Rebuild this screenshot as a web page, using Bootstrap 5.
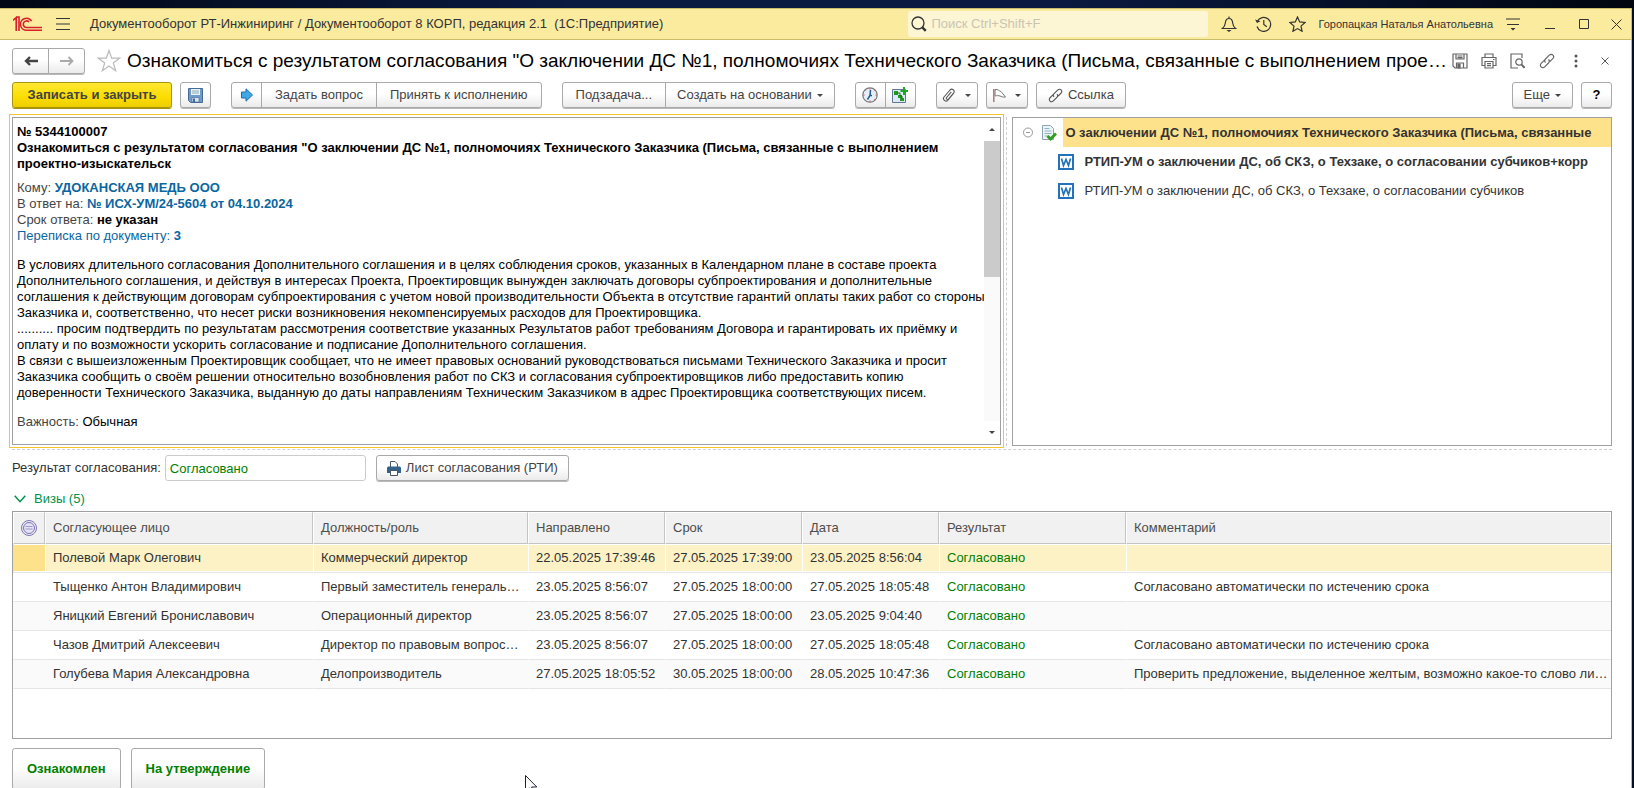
<!DOCTYPE html>
<html lang="ru">
<head>
<meta charset="utf-8">
<meta name="viewport" content="width=device-width, initial-scale=1">
<title>Документооборот</title>
<link href="https://cdn.jsdelivr.net/npm/bootstrap@5.3.0/dist/css/bootstrap.min.css" rel="stylesheet">
<style>
body{font-family:"Liberation Sans",Arial,sans-serif;font-size:13px;line-height:16px;color:#333;background:#050f24}
svg{display:block;flex:none}
.desk-strip{height:8px;background:linear-gradient(90deg,#020814,#0a1a40 35%,#0a1a40 65%,#01060f)}
.app-window{background:#fff;margin-right:2px;border-right:1px solid #c9bd6a}
.title-bar{height:32px;background:#faeb9f;border:solid #c9bd6a;border-width:1px 0;padding-left:13px}
.title-bar button,.form-icons button{border:0;background:none;padding:0;color:#333;width:34px;display:flex;justify-content:center}
.title-bar .user-btn{font-size:11px;width:auto;white-space:nowrap}
.title-bar .menu-btn{width:40px}
.title-bar .close-btn{width:30px}
.app-name{font-size:13px;white-space:pre;color:#333;margin-left:10px}
.search-box{width:300px;height:26px;background:#fdf6d5;border-radius:3px;padding-left:3px;gap:4px}
.search-box input{border:0;background:none;outline:0;padding:0;width:100%;font-size:13px}
.search-box input::placeholder{color:#c9c4b4;opacity:1}
.form-head{padding:1px 12px 0 12px;height:40px}
.form-title{font-size:19px;line-height:24px;color:#000;margin:0;min-width:0;white-space:nowrap}
.form-icons button{width:29px;color:#555}
.btn{--bs-btn-font-size:13px;--bs-btn-line-height:16px;--bs-btn-padding-y:0;--bs-btn-padding-x:13px;--bs-btn-border-radius:3px;--bs-btn-color:#444;--bs-btn-border-color:#a9a9a9;
 height:26px;background:linear-gradient(#fff 45%,#ebebeb);box-shadow:0 1px 0 #b9b9b9;display:inline-flex;align-items:center;justify-content:center;white-space:nowrap;gap:5px}
.btn-group{box-shadow:0 1px 0 #b9b9b9;border-radius:3px}
.btn-group .btn{box-shadow:none;flex:none}
.btn-main{--bs-btn-border-color:#a8950c;background:linear-gradient(#ffe834,#fbdd00 60%,#eecd00);font-weight:700;color:#444;width:160px;box-shadow:0 1px 0 #a8950c}
.btn-ico{--bs-btn-padding-x:0;width:31px}
.btn-nav{--bs-btn-padding-x:0;width:37px}
.btn-drop{--bs-btn-padding-x:0;width:42px}
.btn-slim{--bs-btn-padding-x:11px}
.caret{width:0;height:0;border:3px solid transparent;border-top-color:#444;border-bottom:0}
.commands{padding:2px 19px 0 12px}
.grp{margin-right:20px}
.grp-first{margin-left:20px}
.panels{padding:0 19px 0 9px;margin-top:6px;height:334px}
.message-focus{border:1px solid #f6c52e;padding:2px;flex:995 1 0;min-width:0}
.message-box{border:1px solid #a0a0a0;color:#000;height:100%}
.message-text{padding:6px 0 0 4px;font-size:13px;line-height:16px;white-space:nowrap;min-width:0}
.message-text p{margin:0}
.message-text .para{margin-top:13px}
.message-text a{color:#0a66a0;text-decoration:none}
.message-text .k{color:#444}
.scroll-rail{width:16px}
.scroll-track{background:#fafafa}
.scroll-thumb{height:136px;background:#cbcbcb}
.scroll-end{height:23px;display:flex;align-items:center;justify-content:center}
.up{transform:rotate(180deg)}
.split-v{width:6px;border-left:1px dashed #d0d0d0;margin:3px 0 2px 2px}
.tree{border:1px solid #a0a0a0;margin:3px 0 2px;flex:601 1 0;min-width:0;list-style:none;padding:0}
.tree li{height:29px;white-space:nowrap}
.tree-top{padding-left:8px;gap:6px}
.tree-hit{background:#fee28b;padding-left:2px}
.tree-sub{padding-left:45px;gap:10px}
.split-h{height:1px;border-top:1px dashed #d0d0d0;margin:1px 19px 0 12px}
.result-row{padding:5px 19px 0 12px}
.result-row input{width:201px;height:26px;border:1px solid #ccc;border-radius:3px;padding:0 4px;color:#008000;outline:0}
.print-btn{margin-left:10px;--bs-btn-padding-x:10px}
.visa-row{padding:10px 0 0 14px}
.visa-link{color:#00924a;text-decoration:none}
.visa-panel{border:1px solid #a0a0a0;margin:4px 19px 0 12px}
.visa-table{table-layout:fixed;width:100%;margin:0;border-collapse:separate;border-spacing:0}
.visa-table th,.visa-table td{padding:0 3px 0 7px;overflow:hidden;text-overflow:ellipsis;white-space:nowrap;font-weight:400}
.visa-table th{height:32px;background:#f1f1f1;color:#4d4d4d;border:1px solid #fff;border-right-color:#c4c4c4;border-bottom:1px solid #c4c4c4}
.visa-table td{height:29px;color:#333;border-bottom:1px solid #e5e5e5;border-left:1px solid transparent}
.visa-table th:last-child{border-right-color:#fff}
.visa-table tr:nth-child(odd) td{background:#fafafa}
.visa-table tr.chosen td{background:#fdf1c6;border-left-color:#fff;box-shadow:inset 0 1px #fff,inset 0 -1px #fff}
.visa-table tr.chosen td:first-child{background:#fee28b;border-left-color:#fee28b}
.visa-table td.ok{color:#008000}
.w1{width:32px}.w2{width:268px}.w3{width:215px}.w4{width:137px}.w5{width:187px}
.foot{height:49px;padding:9px 12px 0;overflow:hidden;gap:10px}
.foot .btn{--bs-btn-padding-x:14px;height:42px;font-weight:700;color:#008000}
.pointer{position:absolute;left:525px;bottom:-7px}
</style>
</head>
<body>
<div class="vh-100 d-flex flex-column overflow-hidden position-relative">
<div class="desk-strip flex-shrink-0"></div>
<div class="app-window flex-grow-1 d-flex flex-column">
<header class="title-bar d-flex align-items-center flex-shrink-0">
  <svg class="me-1" width="29" height="16" viewBox="0 0 29 16" fill="none" stroke="#d8202a" stroke-width="1.6"><path d="M0 4.300 3.200 1.600V15M3 1h3v14"/><path d="M18.600 5.200A6 6 0 1 0 14 14.200H29M16 6A3.300 3.300 0 1 0 14 11.500H29"/></svg>
  <button aria-label="Меню"><svg width="14" height="14" viewBox="0 0 14 14" stroke="#333" stroke-width="1.2"><path d="M0 1.500h14M0 7h14M0 12.500h14"/></svg></button>
  <span class="app-name">Документооборот РТ-Инжиниринг / Документооборот 8 КОРП, редакция 2.1  (1С:Предприятие)</span>
  <label class="search-box d-flex align-items-center ms-auto me-1"><svg width="16" height="16" viewBox="0 0 16 16" fill="none" stroke="#333" stroke-width="1.3"><circle cx="7" cy="7" r="6"/><path d="m11.300 11.300 3.500 3.500" stroke-width="2.400"/></svg><input type="text" placeholder="Поиск Ctrl+Shift+F" aria-label="Поиск"></label>
  <button aria-label="Уведомления"><svg width="16" height="16" viewBox="0 0 16 16" fill="none" stroke="#333" stroke-width="1.2"><path d="M1.500 12.500c2-1.500 2.500-3 2.800-5.500C4.600 4 5.500 2.500 8 2.500S11.400 4 11.700 7c.3 2.500.8 4 2.800 5.500zM8 .5v2"/><path d="M5.500 14h5L8 16z" fill="#333" stroke="none"/></svg></button>
  <button aria-label="История"><svg width="17" height="16" viewBox="0 0 17 16" fill="none" stroke="#333" stroke-width="1.2"><path d="M2.300 5.500A7 7 0 1 1 2 10.500M8.800 4v4.500l3 2.300"/><path d="M0 3.500 2 7l3.500-1.800z" fill="#333" stroke="none"/></svg></button>
  <button aria-label="Избранное"><svg width="17" height="16" viewBox="0 0 17 16" fill="none" stroke="#333" stroke-width="1.200"><path d="m8.500 1 2.200 4.900 5.300.6-4 3.600 1.100 5.200-4.600-2.700-4.600 2.700L5 10.100 1 6.500l5.300-.6z"/></svg></button>
  <button class="user-btn ms-1">Горопацкая Наталья Анатольевна</button>
  <button class="menu-btn" aria-label="Настройки"><svg width="14" height="14" viewBox="0 0 14 14" stroke="#333" stroke-width="1.200"><path d="M0 2h14M1 7.500h12"/><path d="M4.500 11h5L7 13.500z" fill="#333" stroke="none"/></svg></button>
  <button aria-label="Свернуть"><svg width="10" height="10" viewBox="0 0 10 10" stroke="#333"><path d="M0 9.500h10"/></svg></button>
  <button aria-label="Развернуть"><svg width="10" height="10" viewBox="0 0 10 10" fill="none" stroke="#333"><path d="M.5.5h9v9h-9z"/></svg></button>
  <button class="close-btn" aria-label="Закрыть"><svg width="11" height="11" viewBox="0 0 11 11" stroke="#333"><path d="m.5.5 10 10m0-10-10 10"/></svg></button>
</header>

<div class="form-head d-flex align-items-center flex-shrink-0">
  <div class="btn-group flex-shrink-0">
    <button class="btn btn-nav" aria-label="Назад"><svg width="14" height="10" viewBox="0 0 14 10" fill="none" stroke="#444" stroke-width="2.400"><path d="M14 5H3M6 1 2 5l4 4"/></svg></button>
    <button class="btn btn-nav" aria-label="Вперёд"><svg width="14" height="10" viewBox="0 0 14 10" fill="none" stroke="#aaa" stroke-width="1.800"><path d="M0 5h12M8.500 1l4 4-4 4"/></svg></button>
  </div>
  <svg class="ms-2 me-1 ps-1" width="30" height="24" viewBox="0 0 26 24" fill="none" stroke="#bbb" stroke-width="1.200"><path d="m12 1.500 2.700 7.600h8l-6.400 4.800 2.400 7.900L12 17.100l-6.700 4.700 2.400-7.900L1.300 9.100h8z"/></svg>
  <h1 class="form-title flex-grow-1">Ознакомиться с результатом согласования "О заключении ДС №1, полномочиях Технического Заказчика (Письма, связанные с выполнением прое…</h1>
  <div class="form-icons d-flex align-items-center flex-shrink-0">
    <button aria-label="Сохранить"><svg width="16" height="16" viewBox="0 0 16 16" fill="none" stroke="#666" stroke-width="1.200"><path d="M1 1h14v14H3l-2-2zM4 1v5h8V1M4.500 15v-5h7v5M5.500 3h5M5.500 4.600h5"/><path d="M6 11h2v4H6z" fill="#666"/></svg></button>
    <button aria-label="Печать"><svg width="16" height="16" viewBox="0 0 16 16" fill="none" stroke="#666" stroke-width="1.200"><path d="M4 4.500V1h8v3.500M4 12.500H1v-8h14v8h-3M4 8.500h8V15H4zM6 10.700h4M6 12.700h4M12 6.500h1.500"/></svg></button>
    <button aria-label="Просмотр"><svg width="15" height="16" viewBox="0 0 15 16" fill="none" stroke="#666" stroke-width="1.200"><path d="M8 15H1V1h11v4"/><circle cx="9" cy="9" r="3.200"/><path d="m11.300 11.300 3.200 3.500" stroke-width="2"/></svg></button>
    <button aria-label="Ссылка"><svg width="16" height="16" viewBox="0 0 16 16" fill="none" stroke="#666" stroke-width="1.200"><path d="M6.500 9.500c-1.300-1.300-1-2.500 0-3.500l3.800-3.800c1.200-1.200 2.700-1 3.600-.1s1 2.400-.1 3.500l-3 3M9.500 6.500c1.300 1.300 1 2.500 0 3.500l-3.800 3.800c-1.200 1.200-2.700 1-3.600.1s-1-2.400.1-3.500l3-3"/></svg></button>
    <button aria-label="Ещё"><svg width="4" height="14" viewBox="0 0 4 14" fill="#555"><circle cx="2" cy="2" r="1.500"/><circle cx="2" cy="7" r="1.500"/><circle cx="2" cy="12" r="1.500"/></svg></button>
    <button aria-label="Закрыть форму"><svg width="8" height="8" viewBox="0 0 8 8" stroke="#555"><path d="m.5.5 7 7m0-7-7 7"/></svg></button>
  </div>
</div>

<div class="commands d-flex align-items-center flex-shrink-0">
  <button class="btn btn-main">Записать и закрыть</button>
  <button class="btn btn-ico ms-2" aria-label="Записать"><svg width="15" height="15" viewBox="0 0 15 15"><path d="M.5.500h14v14H2.500l-2-2z" fill="#6f9bc9" stroke="#456a96"/><path d="M3 1h9v6H3z" fill="#eaf3fb"/><path d="M4 9.500h7V14H4z" fill="#d7e3ef" stroke="#456a96" stroke-width=".6"/><path d="M4 3h7M4 5h7" stroke="#8aa"/><path d="M5 10.500h2V14H5z" fill="#456a96"/></svg></button>
  <div class="btn-group grp grp-first">
    <button class="btn btn-ico" aria-label="Перейти"><svg width="12" height="14" viewBox="0 0 12 14"><path d="M.5 4H5V.8L11.500 7 5 13.200V10H.5z" fill="#41a8e8" stroke="#1d6ca8"/></svg></button>
    <button class="btn">Задать вопрос</button>
    <button class="btn">Принять к исполнению</button>
  </div>
  <div class="btn-group grp">
    <button class="btn">Подзадача...</button>
    <button class="btn btn-slim">Создать на основании <i class="caret"></i></button>
  </div>
  <div class="btn-group grp">
    <button class="btn btn-ico" aria-label="Срок"><svg width="16" height="16" viewBox="0 0 16 16"><circle cx="8" cy="8" r="7.200" fill="#e3effa" stroke="#777" stroke-width="1.200"/><path d="M8.500 3 8 8.500l-2.500 4M8 8.500h2" stroke="#27598c" stroke-width="1.500" fill="none"/><path d="M8 1.500v1M8 13.500v1M1.500 8h1M13.500 8h1M3.500 3.500l.6.600M12.500 3.500l-.6.600M12 12l.6.600" stroke="#d33"/></svg></button>
    <button class="btn btn-ico" aria-label="Процесс"><svg width="16" height="16" viewBox="0 0 16 16"><path d="M.5 2.500h13v13H.5z" fill="#dbe9f6" stroke="#5d7890"/><path d="M2 4h4v4H2zM6 8h4v3H6zM8 11h4v3H8z" fill="#1f9a1f"/><path d="M5 6h3v3h2v3" stroke="#137013" fill="none"/><path d="M12 0v8M8.500 4H16" stroke="#1fa81f" stroke-width="2"/></svg></button>
  </div>
  <button class="btn btn-drop" aria-label="Файлы"><svg width="14" height="15" viewBox="0 0 14 15" fill="none" stroke="#555" stroke-width="1.100"><path d="m11.500 5.500-5.800 6.800c-1.800 2-5.600-.8-3.700-3.300l6-7c2-2 5.300.5 3.700 2.900L6.500 11c-1 1.100-2.800-.2-1.900-1.500l4.700-5.600"/></svg><i class="caret ms-1"></i></button>
  <button class="btn btn-drop ms-2" aria-label="Флаг"><svg width="14" height="14" viewBox="0 0 14 14" fill="none" stroke="#777"><path d="M3 1.500c3-.5 4 1.500 6 2l4.500 5.500c-3 .5-4-.5-5.500-1S5 7.500 3 8z"/><path d="M1.800 1v13" stroke="#a77" stroke-width="1.500"/></svg><i class="caret ms-1"></i></button>
  <button class="btn btn-slim ms-2"><svg width="15" height="15" viewBox="0 0 16 16" fill="none" stroke="#555" stroke-width="1.200"><path d="M6.500 9.500c-1.300-1.300-1-2.500 0-3.500l3.800-3.800c1.200-1.200 2.700-1 3.600-.1s1 2.400-.1 3.500l-3 3M9.500 6.500c1.300 1.300 1 2.500 0 3.500l-3.800 3.800c-1.200 1.200-2.700 1-3.600.1s-1-2.400.1-3.500l3-3"/></svg>Ссылка</button>
  <button class="btn btn-slim ms-auto">Еще <i class="caret"></i></button>
  <button class="btn btn-ico ms-2 fw-bold text-black">?</button>
</div>

<main class="d-flex flex-column flex-grow-1">
<div class="panels d-flex flex-shrink-0">
  <section class="message-focus">
    <div class="message-box d-flex">
      <div class="message-text flex-grow-1">
        <p class="fw-bold">№ 5344100007<br>Ознакомиться с результатом согласования "О заключении ДС №1, полномочиях Технического Заказчика (Письма, связанные с выполнением<br>проектно-изыскательск</p>
        <p class="mt-2 k">Кому: <a class="fw-bold" href="#">УДОКАНСКАЯ МЕДЬ ООО</a><br>В ответ на: <a class="fw-bold" href="#">№ ИСХ-УМ/24-5604 от 04.10.2024</a><br>Срок ответа: <b class="text-black">не указан</b><br><a href="#">Переписка по документу: <b>3</b></a></p>
        <p class="para">В условиях длительного согласования Дополнительного соглашения и в целях соблюдения сроков, указанных в Календарном плане в составе проекта<br>Дополнительного соглашения, и действуя в интересах Проекта, Проектировщик вынужден заключать договоры субпроектирования и дополнительные<br>соглашения к действующим договорам субпроектирования с учетом новой производительности Объекта в отсутствие гарантий оплаты таких работ со стороны<br>Заказчика и, соответственно, что несет риски возникновения некомпенсируемых расходов для Проектировщика.<br>.......... просим подтвердить по результатам рассмотрения соответствие указанных Результатов работ требованиям Договора и гарантировать их приёмку и<br>оплату и по возможности ускорить согласование и подписание Дополнительного соглашения.<br>В связи с вышеизложенным Проектировщик сообщает, что не имеет правовых оснований руководствоваться письмами Технического Заказчика и просит<br>Заказчика сообщить о своём решении относительно возобновления работ по СКЗ и согласования субпроектировщиков либо предоставить копию<br>доверенности Технического Заказчика, выданную до даты направлениям Техническим Заказчиком в адрес Проектировщика соответствующих писем.</p>
        <p class="para"><span class="k">Важность:</span> Обычная</p>
      </div>
      <div class="scroll-rail d-flex flex-column flex-shrink-0">
        <div class="scroll-end"><i class="caret up"></i></div>
        <div class="scroll-track flex-grow-1"><div class="scroll-thumb"></div></div>
        <div class="scroll-end"><i class="caret"></i></div>
      </div>
    </div>
  </section>
  <div class="split-v flex-shrink-0"></div>
  <ul class="tree overflow-hidden">
    <li class="tree-top d-flex align-items-center fw-bold"><svg width="15" height="11" viewBox="0 0 15 11" fill="none" stroke="#999"><circle cx="7" cy="5.500" r="4.500"/><path d="M5 5.500h4"/></svg>
      <svg width="15" height="16" viewBox="0 0 15 16"><path d="M.5.500h8l3 3v11H.5z" fill="#eef5f8" stroke="#8aa4b4"/><path d="M2.500 3.500h5M2.500 6h7M2.500 8.500h7M2.500 11h4" stroke="#8fb0c4"/><path d="m5.500 11 3 3L14 8.500" stroke="#2f9e1c" stroke-width="2.800" fill="none"/></svg>
      <span class="tree-hit align-self-stretch d-flex align-items-center flex-grow-1">О заключении ДС №1, полномочиях Технического Заказчика (Письма, связанные</span></li>
    <li class="d-flex align-items-center fw-bold tree-sub"><svg width="16" height="16" viewBox="0 0 16 16"><path d="M1 1h14v14H1z" fill="#fff" stroke="#2372ba" stroke-width="2"/><path d="m3.500 4.500 2 7L8 5.500l2.500 6 2-7" fill="none" stroke="#2372ba" stroke-width="1.700"/></svg>РТИП-УМ о заключении ДС, об СКЗ, о Техзаке, о согласовании субчиков+корр</li>
    <li class="d-flex align-items-center tree-sub"><svg width="16" height="16" viewBox="0 0 16 16"><path d="M1 1h14v14H1z" fill="#fff" stroke="#2372ba" stroke-width="2"/><path d="m3.500 4.500 2 7L8 5.500l2.500 6 2-7" fill="none" stroke="#2372ba" stroke-width="1.700"/></svg>РТИП-УМ о заключении ДС, об СКЗ, о Техзаке, о согласовании субчиков</li>
  </ul>
</div>
<div class="split-h flex-shrink-0"></div>

<div class="result-row d-flex align-items-center flex-shrink-0">
  <label for="res" class="me-1 text-nowrap">Результат согласования:</label>
  <input id="res" type="text" value="Согласовано">
  <button class="btn print-btn"><svg width="14" height="15" viewBox="0 0 14 15"><path d="M3.500 6V.500H8L10.500 3v3" fill="#fff" stroke="#456"/><path d="M1 5.500h12l1 1V12H0V6.500z" fill="#35608c"/><path d="M3.500 9.500h7v5h-7z" fill="#fff" stroke="#456"/></svg>Лист согласования (РТИ)</button>
</div>
<div class="visa-row flex-shrink-0"><a class="visa-link d-flex align-items-center gap-2" href="#"><svg width="12" height="8" viewBox="0 0 12 8" fill="none" stroke="#00924a" stroke-width="1.500"><path d="m.7.700 5.300 6 5.300-6"/></svg>Визы (5)</a></div>

<div class="visa-panel flex-grow-1 overflow-hidden">
<table class="visa-table">
  <colgroup><col class="w1"><col class="w2"><col class="w3"><col class="w4"><col class="w4"><col class="w4"><col class="w5"><col></colgroup>
  <thead><tr><th aria-label="Состояние"><svg width="16" height="16" viewBox="0 0 16 16" fill="none" stroke="#7b74b4"><circle cx="8" cy="8" r="7.500"/><circle cx="8" cy="8" r="5.500" fill="#e4e2f4"/><path d="M4.500 6.500h7M4.500 9h7" stroke="#9d98c9"/></svg></th><th>Согласующее лицо</th><th>Должность/роль</th><th>Направлено</th><th>Срок</th><th>Дата</th><th>Результат</th><th>Комментарий</th></tr></thead>
  <tbody>
  <tr class="chosen"><td></td><td>Полевой Марк Олегович</td><td>Коммерческий директор</td><td>22.05.2025 17:39:46</td><td>27.05.2025 17:39:00</td><td>23.05.2025 8:56:04</td><td class="ok">Согласовано</td><td></td></tr>
  <tr><td></td><td>Тыщенко Антон Владимирович</td><td>Первый заместитель генераль…</td><td>23.05.2025 8:56:07</td><td>27.05.2025 18:00:00</td><td>27.05.2025 18:05:48</td><td class="ok">Согласовано</td><td>Согласовано автоматически по истечению срока</td></tr>
  <tr><td></td><td>Яницкий Евгений Брониславович</td><td>Операционный директор</td><td>23.05.2025 8:56:07</td><td>27.05.2025 18:00:00</td><td>23.05.2025 9:04:40</td><td class="ok">Согласовано</td><td></td></tr>
  <tr><td></td><td>Чазов Дмитрий Алексеевич</td><td>Директор по правовым вопрос…</td><td>23.05.2025 8:56:07</td><td>27.05.2025 18:00:00</td><td>27.05.2025 18:05:48</td><td class="ok">Согласовано</td><td>Согласовано автоматически по истечению срока</td></tr>
  <tr><td></td><td>Голубева Мария Александровна</td><td>Делопроизводитель</td><td>27.05.2025 18:05:52</td><td>30.05.2025 18:00:00</td><td>28.05.2025 10:47:36</td><td class="ok">Согласовано</td><td>Проверить предложение, выделенное желтым, возможно какое-то слово ли…</td></tr>
  </tbody>
</table>
</div>
<div class="foot d-flex flex-shrink-0"><button class="btn">Ознакомлен</button><button class="btn">На утверждение</button></div>
</main>
</div>
<svg class="pointer" width="14" height="20" viewBox="0 0 14 20"><path d="M.5.500v16l3.800-3.600 2.500 5.600 2.300-1-2.500-5.500h5.200z" fill="#fff" stroke="#223"/></svg>
</div>
<script src="https://cdn.jsdelivr.net/npm/bootstrap@5.3.0/dist/js/bootstrap.bundle.min.js"></script>
</body>
</html>
